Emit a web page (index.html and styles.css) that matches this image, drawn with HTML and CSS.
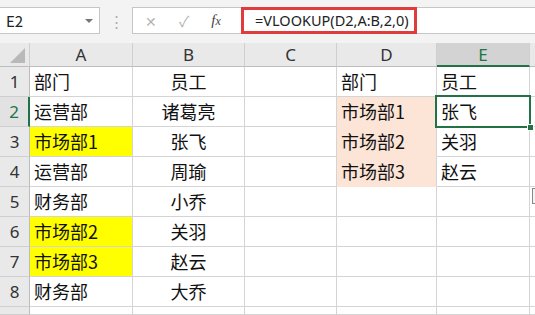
FILE: index.html
```html
<!DOCTYPE html>
<html lang="zh-CN">
<head>
  <meta charset="UTF-8">
  <title>VLOOKUP</title>
  <link rel="stylesheet" href="styles.css">
</head>
<body>
  <div class="barra">
    <div class="nombre">
      <span>E2</span>
      <span class="flecha"></span>
    </div>
    <div class="puntos">⋮</div>
    <div class="botones">
      <span class="btn-x">✕</span>
      <span class="btn-ok">✓</span>
      <span class="btn-fx"><i>f</i><i>x</i></span>
    </div>
    <div class="formula">
      <div class="formula-texto">=VLOOKUP(D2,A:B,2,0)</div>
    </div>
  </div>

  <div class="hoja">
    <div class="cab esquina"></div>
    <div class="cab">A</div>
    <div class="cab">B</div>
    <div class="cab">C</div>
    <div class="cab">D</div>
    <div class="cab activa">E</div>
    <div class="cab resto"></div>

    <div class="fila">1</div>
    <div class="celda">部门</div>
    <div class="celda centro">员工</div>
    <div class="celda"></div>
    <div class="celda">部门</div>
    <div class="celda">员工</div>
    <div class="celda resto"></div>

    <div class="fila activa">2</div>
    <div class="celda">运营部</div>
    <div class="celda centro">诸葛亮</div>
    <div class="celda"></div>
    <div class="celda rosa">市场部1</div>
    <div class="celda elegida">张飞</div>
    <div class="celda resto"></div>

    <div class="fila">3</div>
    <div class="celda amarilla">市场部1</div>
    <div class="celda centro">张飞</div>
    <div class="celda"></div>
    <div class="celda rosa">市场部2</div>
    <div class="celda">关羽</div>
    <div class="celda resto"></div>

    <div class="fila">4</div>
    <div class="celda">运营部</div>
    <div class="celda centro">周瑜</div>
    <div class="celda"></div>
    <div class="celda rosa">市场部3</div>
    <div class="celda">赵云</div>
    <div class="celda resto"></div>

    <div class="fila">5</div>
    <div class="celda">财务部</div>
    <div class="celda centro">小乔</div>
    <div class="celda"></div>
    <div class="celda"></div>
    <div class="celda"></div>
    <div class="celda resto"><span class="rapido"></span></div>

    <div class="fila">6</div>
    <div class="celda amarilla">市场部2</div>
    <div class="celda centro">关羽</div>
    <div class="celda"></div>
    <div class="celda"></div>
    <div class="celda"></div>
    <div class="celda resto"></div>

    <div class="fila">7</div>
    <div class="celda amarilla">市场部3</div>
    <div class="celda centro">赵云</div>
    <div class="celda"></div>
    <div class="celda"></div>
    <div class="celda"></div>
    <div class="celda resto"></div>

    <div class="fila">8</div>
    <div class="celda">财务部</div>
    <div class="celda centro">大乔</div>
    <div class="celda"></div>
    <div class="celda"></div>
    <div class="celda"></div>
    <div class="celda resto"></div>

    <div class="fila"></div>
    <div class="celda"></div>
    <div class="celda"></div>
    <div class="celda"></div>
    <div class="celda"></div>
    <div class="celda"></div>
    <div class="celda resto"></div>
  </div>
</body>
</html>
```

FILE: styles.css
```css
body {
  margin: 0;
  padding: 0;
  width: 535px;
  height: 315px;
  overflow: hidden;
  background-color: #ffffff;
  font-family: "Noto Sans CJK SC", "Noto Sans", sans-serif;
}

.barra {
  display: flex;
  align-items: flex-start;
  height: 43px;
  padding-top: 7px;
  box-sizing: border-box;
  background-color: #f3f3f3;
}

.nombre {
  display: flex;
  align-items: center;
  justify-content: space-between;
  width: 100px;
  height: 27px;
  padding: 0 6px 0 6px;
  box-sizing: border-box;
  background-color: #ffffff;
  border: 1px solid #c6c6c6;
  border-left: none;
  font-size: 15px;
  color: #222;
}

.flecha {
  width: 0;
  height: 0;
  border-left: 4px solid transparent;
  border-right: 4px solid transparent;
  border-top: 4px solid #777;
}

.puntos {
  width: 32px;
  text-align: center;
  color: #aaa;
  font-size: 15px;
  line-height: 27px;
}

.botones {
  display: flex;
  align-items: center;
  width: 109px;
  height: 27px;
  box-sizing: border-box;
  background-color: #ffffff;
  border: 1px solid #c6c6c6;
  border-right: none;
  color: #b4b4b4;
}

.btn-x {
  margin-left: 12px;
  font-size: 14px;
}

.btn-ok {
  margin-left: 22px;
  font-size: 15px;
}

.btn-fx {
  margin-left: 22px;
  font-family: "Liberation Serif", serif;
  font-size: 15px;
  color: #444;
}

.btn-fx i:last-child {
  font-size: 12px;
}

.formula {
  flex: 1;
  height: 27px;
  box-sizing: border-box;
  background-color: #ffffff;
  border-top: 1px solid #c6c6c6;
  border-bottom: 1px solid #c6c6c6;
}

.formula-texto {
  width: 176px;
  height: 27px;
  margin-top: -1px;
  padding-left: 11px;
  box-sizing: border-box;
  border: 3px solid #e03c3c;
  font-family: "Noto Sans", sans-serif;
  font-size: 14.5px;
  line-height: 21px;
  color: #222;
}

.hoja {
  display: grid;
  grid-template-columns: 30px 103px 112px 92px 100px 93px 5px;
  grid-template-rows: 24px repeat(8, 30px) 8px;
}

.cab {
  background-color: #e9e9e9;
  border-right: 1px solid #cfcfcf;
  border-bottom: 1px solid #bdbdbd;
  text-align: center;
  font-family: "Noto Sans", sans-serif;
  font-size: 17px;
  line-height: 24px;
  color: #333;
}

.cab.activa {
  background-color: #d3d3d3;
  color: #217346;
  border-bottom: 2px solid #217346;
}

.cab.resto {
  border-right: none;
}

.esquina {
  position: relative;
}

.esquina::after {
  content: "";
  position: absolute;
  right: 4px;
  bottom: 3px;
  width: 0;
  height: 0;
  border-left: 15px solid transparent;
  border-bottom: 15px solid #b9b9b9;
}

.fila {
  background-color: #e9e9e9;
  border-right: 1px solid #bdbdbd;
  border-bottom: 1px solid #cfcfcf;
  text-align: center;
  font-family: "Noto Sans", sans-serif;
  font-size: 17px;
  line-height: 30px;
  color: #333;
}

.fila.activa {
  background-color: #e2e2e2;
  color: #217346;
  border-right: 2px solid #217346;
}

.celda {
  border-right: 1px solid #d4d4d4;
  border-bottom: 1px solid #d4d4d4;
  padding-left: 4px;
  font-size: 18px;
  line-height: 29px;
  color: #111;
  white-space: nowrap;
}

.celda.centro {
  padding-left: 0;
  text-align: center;
}

.celda.resto {
  border-right: none;
  padding-left: 0;
  position: relative;
}

.amarilla {
  background-color: #ffff00;
}

.rosa {
  background-color: #fce4d6;
  border-bottom-color: #fce4d6;
}

.elegida {
  position: relative;
}

.elegida::before {
  content: "";
  position: absolute;
  left: -2px;
  top: -2px;
  right: -2px;
  bottom: -2px;
  border: 2px solid #217346;
}

.elegida::after {
  content: "";
  position: absolute;
  right: -5px;
  bottom: -5px;
  width: 5px;
  height: 5px;
  background-color: #217346;
  border: 1px solid #ffffff;
  z-index: 2;
}

.rapido {
  position: absolute;
  left: 2px;
  top: 1px;
  width: 10px;
  height: 14px;
  border: 1px solid #888;
  background-color: #f4f4f4;
}
```
